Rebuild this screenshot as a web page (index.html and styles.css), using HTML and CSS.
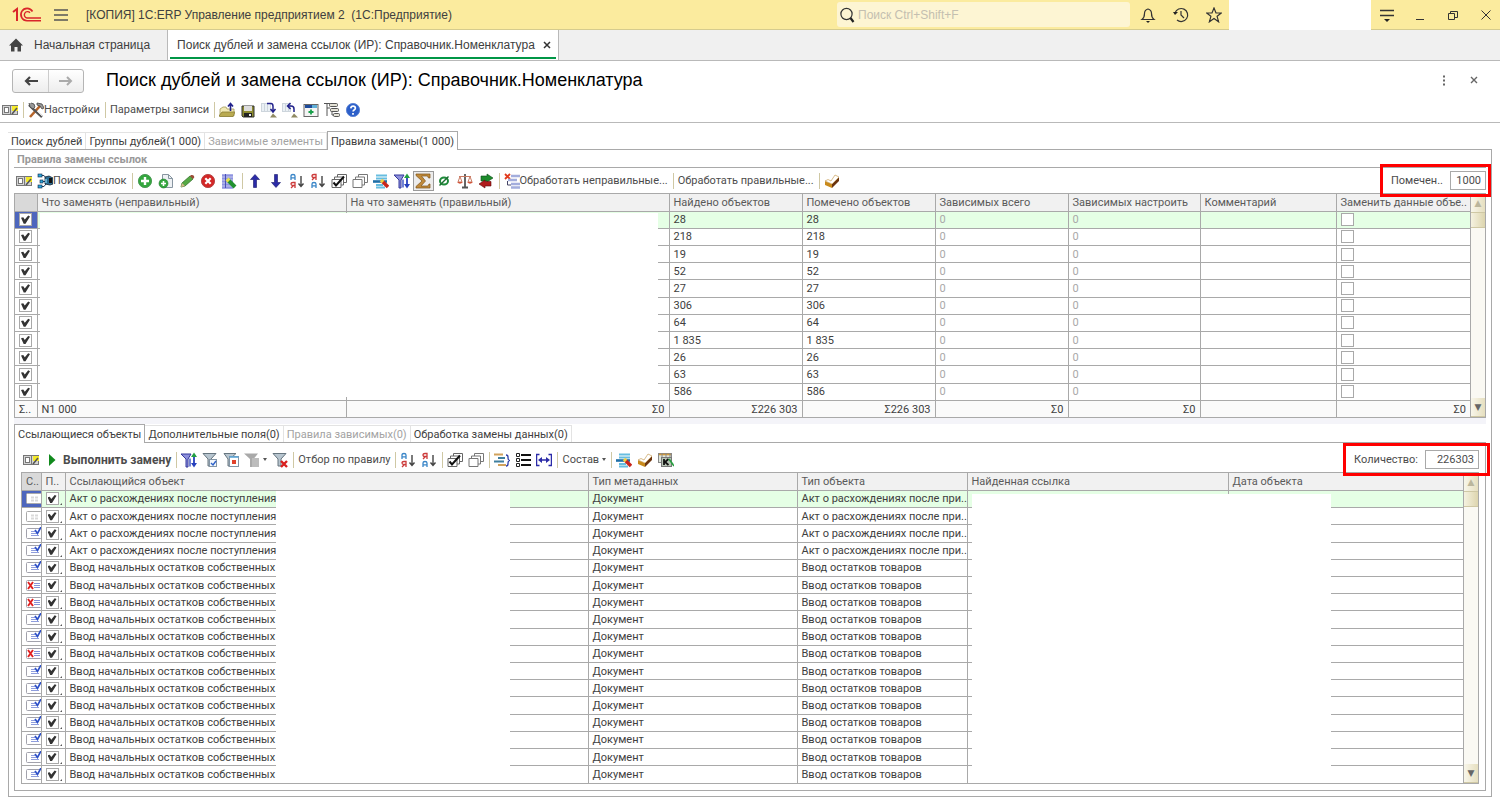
FILE: index.html
```html
<!DOCTYPE html>
<html lang="ru">

<head>
    <meta charset="UTF-8">
    <meta name="viewport" content="width=device-width, initial-scale=1.0">
    <title>Поиск дублей и замена ссылок</title>
    <link rel="stylesheet" href="styles.css">
</head>

<body>
    <!-- icon set -->
    <svg class="sprite" xmlns="http://www.w3.org/2000/svg">
        <symbol id="i-panel" viewBox="0 0 16 16">
            <rect x="0.5" y="3.5" width="15" height="9" fill="#d4d4d4" stroke="#777" />
            <rect x="2.5" y="5.5" width="4" height="5" fill="#fff" stroke="#777" />
            <rect x="10" y="4" width="6" height="5" fill="#f4e92a" />
            <path d="M10 12l5-6" stroke="#555" stroke-width="1.5" />
            <path d="M8.500 4v8" stroke="#777" />
        </symbol>
        <symbol id="i-tools" viewBox="0 0 16 16">
            <path d="M2 15L12 4" stroke="#b5652b" stroke-width="2.6" />
            <path d="M1 3l4 4 9 8" stroke="#555" stroke-width="2.4" fill="none" />
            <path d="M1 1l1 4 3 2 2-2-1-3-3-1M9 1l5 1 2 4-2 1-2-3-3-1z" fill="#999" stroke="#444" stroke-width=".8" />
            <path d="M9 9l5 5" stroke="#ddd" />
        </symbol>
        <symbol id="i-open" viewBox="0 0 16 16">
            <path d="M1 14V7l3-2h3l1 2h7v7z" fill="#f0e9b4" stroke="#a39a58" stroke-width=".8" />
            <path d="M0 14l3-4h13l-2 4.500H1z" fill="#b9aa50" stroke="#8a7d35" stroke-width=".8" />
            <path d="M11.500 9V2M9 4.500l2.500-3 2.500 3" stroke="#22228c" stroke-width="1.6" fill="none" />
        </symbol>
        <symbol id="i-save" viewBox="0 0 16 16">
            <path d="M2 4h12v11H3l-1-1z" fill="#8c8a2f" stroke="#333" />
            <rect x="4" y="4" width="8" height="5" fill="#ddd" />
            <rect x="4" y="11" width="8" height="4" fill="#222" />
            <rect x="9" y="12" width="2" height="2" fill="#eee" />
        </symbol>
        <symbol id="i-load" viewBox="0 0 16 16">
            <rect x="0.500" y="1.500" width="9" height="8" fill="#eaf0f5" stroke="#cdd5dc" />
            <path d="M3.500 2v7M6.500 2v7" stroke="#cdd5dc" />
            <path d="M6 1.500h4q2 0 2 3v5M9.500 7l2.500 3 2.500-3" stroke="#22228c" stroke-width="1.5" fill="none" />
            <path d="M9 15.500l3-4 4 4z" fill="#8f8a62" />
        </symbol>
        <symbol id="i-unload" viewBox="0 0 16 16">
            <rect x="0.500" y="1.500" width="8" height="8" fill="#eaf0f5" stroke="#cdd5dc" />
            <path d="M3.500 2v7M6.500 2v7" stroke="#cdd5dc" />
            <path d="M12 10V7q0-3-3-3H6M8.500 1L5.500 4l3 3" stroke="#22228c" stroke-width="1.5" fill="none" />
            <path d="M9 15.500l3-4 4 4z" fill="#8f8a62" />
        </symbol>
        <symbol id="i-window" viewBox="0 0 16 16">
            <rect x="1" y="2.500" width="14" height="12" fill="#f4f4f4" stroke="#666" />
            <rect x="2" y="3" width="12" height="3" fill="#1d4b9b" />
            <rect x="9" y="3" width="5" height="3" fill="#5fb0d8" />
            <path d="M8 7.500v5M5.500 10h5" stroke="#19a04b" stroke-width="1.8" />
        </symbol>
        <symbol id="i-tree" viewBox="0 0 16 16">
            <path d="M0 1.500h7M3 2v12M3 6h3M8 8v5h2" stroke="#555" fill="none" />
            <rect x="5.500" y="1.500" width="8" height="3" rx="1" fill="#e4e2d6" stroke="#555" />
            <rect x="6.500" y="6.500" width="8" height="3" rx="1" fill="#e4e2d6" stroke="#555" />
            <rect x="9.500" y="11.500" width="6" height="3" rx="1" fill="#e4e2d6" stroke="#555" />
        </symbol>
        <symbol id="i-help" viewBox="0 0 16 16">
            <circle cx="8" cy="8" r="6.600" fill="#2c5fc9" stroke="#5f86d6" />
            <path d="M5.800 6.300q.2-2.200 2.300-2.200t2.300 2q0 1.200-1.300 1.900-1 .6-1 1.600M8 11v1.800" stroke="#fff" stroke-width="1.7" fill="none" />
        </symbol>
        <symbol id="i-links" viewBox="0 0 16 16">
            <path d="M5 2.500h2l3 4M5 8.500h5M5 13.500h2l3-4" stroke="#246" fill="none" />
            <rect x="1" y="1" width="4" height="3" fill="#2aa5d8" stroke="#124" stroke-width=".6" />
            <rect x="3" y="7" width="3" height="3" fill="#2aa5d8" stroke="#124" stroke-width=".6" />
            <rect x="1" y="12" width="4" height="3" fill="#2aa5d8" stroke="#124" stroke-width=".6" />
            <path d="M8 4l4-1 4 2v6l-3 1-5-1z" fill="#2b6d94" stroke="#123" stroke-width=".8" />
            <path d="M12 5h3v5h-3z" fill="#111" />
            <path d="M9 6v4" stroke="#7fd0f0" stroke-width="1.400" />
        </symbol>
        <symbol id="i-add" viewBox="0 0 16 16">
            <circle cx="8" cy="8" r="6.600" fill="#34a63e" stroke="#4f9c58" />
            <path d="M8 4v8M4 8h8" stroke="#fff" stroke-width="2.400" />
        </symbol>
        <symbol id="i-copy" viewBox="0 0 16 16">
            <path d="M4.500 1.500h6l4 4v9h-10z" fill="#eef1f4" stroke="#8795a0" />
            <path d="M10.500 1.500v4h4" fill="none" stroke="#8795a0" />
            <circle cx="5.500" cy="10.500" r="4.500" fill="#34a63e" stroke="#1f7d2b" stroke-width=".6" />
            <path d="M5.500 8v5M3 10.500h5" stroke="#fff" stroke-width="1.600" />
        </symbol>
        <symbol id="i-edit" viewBox="0 0 16 16">
            <path d="M2 14l1-4L11 3l3 3-8 7z" fill="#55a944" stroke="#35722c" stroke-width=".8" />
            <path d="M2 14l1-4 3 3z" fill="#d6b98a" />
            <path d="M11 3l1-1q2-.5 3 1t-1 3z" fill="#9c4e38" />
        </symbol>
        <symbol id="i-delete" viewBox="0 0 16 16">
            <circle cx="8" cy="8" r="6.600" fill="#d32626" stroke="#b84a4a" />
            <path d="M5.300 5.300l5.400 5.400M10.700 5.300l-5.400 5.400" stroke="#fff" stroke-width="2.200" />
        </symbol>
        <symbol id="i-listpen" viewBox="0 0 16 16">
            <path d="M1 2.500h11M1 5.500h11M1 8.500h11M1 11.500h11M1 14.500h11" stroke="#8e94e0" stroke-width="2.400" />
            <path d="M4.500 1v14" stroke="#4a50b8" />
            <path d="M7 7l7 7" stroke="#22902f" stroke-width="4" />
            <path d="M6 6l2 2" stroke="#e6e04b" stroke-width="4" />
        </symbol>
        <symbol id="i-up" viewBox="0 0 16 16">
            <path d="M8 1.500l4.500 5h-3v8h-3v-8h-3z" fill="#2b2ba8" stroke="#15156a" stroke-width=".6" />
        </symbol>
        <symbol id="i-down" viewBox="0 0 16 16">
            <path d="M8 14.500l4.500-5h-3v-8h-3v8h-3z" fill="#2b2ba8" stroke="#15156a" stroke-width=".6" />
        </symbol>
        <symbol id="i-az" viewBox="0 0 16 16">
            <path d="M2 7V3q0-1.500 2-1.500T6 3v4M2 4.800h4" stroke="#3a86c8" stroke-width="1.300" fill="none" />
            <path d="M6 15V9.500H4q-2 0-2 1.500t2 1.500h2M4.500 12.500L2 15" stroke="#cc3a3a" stroke-width="1.300" fill="none" />
            <path d="M12 3v10M9.500 10.500l2.500 3 2.500-3" stroke="#444" stroke-width="1.400" fill="none" />
        </symbol>
        <symbol id="i-za" viewBox="0 0 16 16">
            <path d="M6 7V1.500H4Q2 1.500 2 3t2 1.500h2M4.500 4.500L2 7" stroke="#cc3a3a" stroke-width="1.300" fill="none" />
            <path d="M2 15v-4q0-1.500 2-1.500t2 1.500v4M2 12.800h4" stroke="#3a86c8" stroke-width="1.300" fill="none" />
            <path d="M12 3v10M9.500 10.500l2.500 3 2.500-3" stroke="#444" stroke-width="1.400" fill="none" />
        </symbol>
        <symbol id="i-checkall" viewBox="0 0 16 16">
            <path d="M6.500 1.500h9v8h-9z" fill="#fff" stroke="#666" />
            <path d="M3.500 4h9v8h-9z" fill="#fff" stroke="#666" />
            <path d="M1 6.500h9v8H1z" fill="#fff" stroke="#666" />
            <path d="M2.500 9.500l2.500 3 8-9" stroke="#111" stroke-width="2" fill="none" />
        </symbol>
        <symbol id="i-uncheck" viewBox="0 0 16 16">
            <path d="M6.500 1.500h9v8h-9z" fill="#fff" stroke="#777" />
            <path d="M3.500 4h9v8h-9z" fill="#fff" stroke="#777" />
            <path d="M1 6.500h9v8H1z" fill="#fff" stroke="#777" />
        </symbol>
        <symbol id="i-rowpen" viewBox="0 0 16 16">
            <path d="M3 2.500h11M3 5.500h11M3 12h7M3 14.500h9" stroke="#67bde0" stroke-width="2" />
            <path d="M0 8.500h14" stroke="#1f6fa8" stroke-width="2.600" />
            <path d="M9 8l6 6" stroke="#c9261c" stroke-width="3.600" />
            <path d="M8 7l2 2" stroke="#f0cf43" stroke-width="3.600" />
        </symbol>
        <symbol id="i-filtersort" viewBox="0 0 16 16">
            <path d="M0 2h10L7 7v8H5V7z" fill="#8d90dc" stroke="#34389c" />
            <path d="M9 14.500v-8" stroke="#2640bd" stroke-width="1.300" />
            <path d="M13 3v10" stroke="#2640bd" stroke-width="1.800" />
            <path d="M10 5l3-4.500L16 5z" fill="#23a044" />
            <path d="M10 11l3 4.500L16 11z" fill="#2640bd" />
        </symbol>
        <symbol id="i-sum" viewBox="0 0 16 16">
            <path d="M1 1h14v4h-1.500L12.500 3H6.500l4 5-4.500 5h7l1-2H15v4H1v-1.500L7 8 1 2.500z" fill="#c08a3a" stroke="#80541a" stroke-width=".7" />
        </symbol>
        <symbol id="i-empty" viewBox="0 0 16 16">
            <ellipse cx="8" cy="8" rx="4" ry="3.500" fill="none" stroke="#1e8a3a" stroke-width="2" />
            <path d="M3.500 12.500l9-9" stroke="#1b6d30" stroke-width="1.400" />
        </symbol>
        <symbol id="i-scales" viewBox="0 0 16 16">
            <path d="M8 1v13M5 14.500h6" stroke="#555" stroke-width="1.800" />
            <path d="M2 3.500h12M3 3.500L1 9h4zM13 3.500L11 9h4z" stroke="#c97a62" fill="none" />
            <path d="M0 9h6q-3 3.500-6 0M10 9h6q-3 3.500-6 0" fill="#d0563c" />
        </symbol>
        <symbol id="i-swap" viewBox="0 0 16 16">
            <path d="M3 3h6V1l6 4-6 4V8H3z" fill="#1c8b2b" stroke="#0e4c17" stroke-width=".6" />
            <path d="M13 8.500H7V7l-6 4 6 4v-2h6z" fill="#b01c1c" stroke="#5e0c0c" stroke-width=".6" />
        </symbol>
        <symbol id="i-badrows" viewBox="0 0 16 16">
            <path d="M1 1l5 5M6 1L1 6" stroke="#e23a1c" stroke-width="1.800" />
            <path d="M7 3h9M4 7h9M7 11h9M7 14.500h9" stroke="#a3addc" stroke-width="2.600" />
            <path d="M3.500 8v4H7" stroke="#446" fill="none" />
        </symbol>
        <symbol id="i-brush" viewBox="0 0 16 16">
            <path d="M1 8l7 3v4l-7-3z" fill="#c98a1c" />
            <path d="M8 11l7-7v4l-7 7z" fill="#6b3410" />
            <path d="M1 8l3-1.500L7 8l4-6 4 2-7 7z" fill="#fff" stroke="#c9a05c" stroke-width=".7" />
        </symbol>
        <symbol id="i-play" viewBox="0 0 16 16">
            <path d="M5 2l6.500 6L5 14z" fill="#118a1d" />
        </symbol>
        <symbol id="i-filter" viewBox="0 0 16 16">
            <path d="M1 1.500h13L9 7v7H6V7z" fill="#b7c5cf" stroke="#66757f" />
            <rect x="7.500" y="7.500" width="7" height="7" fill="#f3f7fb" stroke="#8495a5" />
            <path d="M9 11l2 2 3-4" stroke="#2f62c9" stroke-width="1.400" fill="none" />
        </symbol>
        <symbol id="i-filterform" viewBox="0 0 16 16">
            <path d="M1 1.500h12L7 7v7H5V7z" fill="#b7c5cf" stroke="#66757f" />
            <rect x="6.500" y="4.500" width="9" height="10" fill="#fff" stroke="#8495a5" />
            <path d="M6.500 5h9" stroke="#5aa5d8" stroke-width="1.600" />
            <rect x="9" y="8" width="4" height="4" fill="#e2432c" />
        </symbol>
        <symbol id="i-filteroff" viewBox="0 0 16 16">
            <path d="M0 1.500h14L9.500 7v8H6V7z" fill="#a9a9a9" />
            <rect x="8" y="6" width="7" height="9" fill="#bcbcbc" />
        </symbol>
        <symbol id="i-filterclear" viewBox="0 0 16 16">
            <path d="M1 1.500h13L9 7v7H6V7z" fill="#b7c5cf" stroke="#66757f" />
            <path d="M9 9l6 6M15 9l-6 6" stroke="#d81f1f" stroke-width="2.400" />
        </symbol>
        <symbol id="i-group" viewBox="0 0 16 16">
            <path d="M0 2.500h9M4 13h8" stroke="#d1a25c" stroke-width="2" />
            <path d="M4 6h7M0 9.500h10" stroke="#3f7f9f" stroke-width="2" />
            <path d="M12 3q2 0 2 2v1q0 2 1.500 2.500Q14 9 14 11v1q0 2-2 2" stroke="#2b3ba8" stroke-width="1.300" fill="none" />
        </symbol>
        <symbol id="i-list" viewBox="0 0 16 16">
            <path d="M6 3h10M6 8h10M6 13h10" stroke="#111" stroke-width="2" />
            <path d="M1.500 1.500h3v3h-3zM1.500 6.500h3v3h-3zM1.500 11.500h3v3h-3z" fill="none" stroke="#222" />
        </symbol>
        <symbol id="i-width" viewBox="0 0 16 16">
            <path d="M3.500 2.500h-3v11h3M12.500 2.500h3v11h-3M4 8h8" stroke="#2b2ba8" stroke-width="1.500" fill="none" />
            <path d="M2 8l4-3v6zM14 8l-4-3v6z" fill="#2b2ba8" />
        </symbol>
        <symbol id="i-console" viewBox="0 0 16 16">
            <rect x="0.500" y="1.500" width="13" height="9" fill="#dfe6dc" stroke="#888" />
            <path d="M1 2.500h12" stroke="#d39a3a" stroke-width="1.600" />
            <path d="M4 1v9M8 1v5M12 1v5" stroke="#888" />
            <rect x="3.500" y="5.500" width="10" height="9" fill="#b7c4b4" stroke="#777" />
            <path d="M6 7v6M10.500 7L7 10l3.500 3" stroke="#111" stroke-width="1.800" fill="none" />
            <path d="M11 7l5 7" stroke="#27a040" stroke-width="1.600" />
        </symbol>
        <symbol id="i-doc" viewBox="0 0 16 13">
            <rect x="0.500" y="1.500" width="15" height="10" rx="1" fill="#fff" stroke="#aaa" />
            <path d="M5 5.500h3M9 5.500h3M5 8.500h3M9 8.500h3" stroke="#d9d9d9" stroke-width="2" />
        </symbol>
        <symbol id="i-posted" viewBox="0 0 16 13">
            <rect x="0.500" y="1.500" width="15" height="10" rx="1" fill="#fff" stroke="#a2a2ac" />
            <path d="M5 4.500h4M5 6.500h7M5 8.500h8" stroke="#8f9ddd" />
            <path d="M9 3l2.500 3.500L15 0" stroke="#2d50c8" stroke-width="1.700" fill="none" />
        </symbol>
        <symbol id="i-deleted" viewBox="0 0 16 13">
            <rect x="0.500" y="1.500" width="15" height="10" rx="1" fill="#fff" stroke="#a2a2ac" />
            <path d="M8 4.500h6M8 6.500h6M8 8.500h6" stroke="#8593d8" />
            <path d="M2 3l5 7M7 3l-5 7" stroke="#e02121" stroke-width="1.900" />
        </symbol>
    </svg>

    <header class="titlebar">
        <svg class="logo" viewBox="0 0 30 16">
            <path d="M1 5l4-3v12" stroke="#d9252a" stroke-width="2" fill="none" />
            <path d="M20.500 4.500A6.200 6.200 0 1 0 15 13.800H29" stroke="#d9252a" stroke-width="1.600" fill="none" />
            <path d="M18 5.800A3.200 3.200 0 1 0 15 11H29" stroke="#d9252a" stroke-width="1.400" fill="none" />
        </svg>
        <button class="flat" aria-label="Меню">
            <svg class="icon" viewBox="0 0 16 16"><path d="M1 3h14M1 8h14M1 13h14" stroke="#555" stroke-width="1.400" /></svg>
        </button>
        <div class="app-name">[КОПИЯ] 1С:ERP Управление предприятием 2&nbsp; (1С:Предприятие)</div>
        <label class="search">
            <svg class="icon" viewBox="0 0 16 16"><circle cx="7.500" cy="7" r="5.600" fill="none" stroke="#333" stroke-width="1.200" /><path d="M11.500 11l3 4" stroke="#222" stroke-width="2.200" /></svg>
            <input type="text" placeholder="Поиск Ctrl+Shift+F" aria-label="Поиск">
        </label>
        <div class="title-tools">
            <button class="flat" aria-label="Уведомления">
                <svg class="icon" viewBox="0 0 16 16"><path d="M2 12.500q2.500-2 2.500-6Q4.500 3 8 2q3.500 1 3.500 4.500 0 4 2.500 6z" fill="none" stroke="#333" stroke-width="1.200" /><path d="M6 14h4l-2 2z" fill="#222" /></svg>
            </button>
            <button class="flat" aria-label="История">
                <svg class="icon" viewBox="0 0 16 16"><path d="M2 6a6.500 6.500 0 1 1 2 7" fill="none" stroke="#333" stroke-width="1.200" /><path d="M8 4v4l3 3" fill="none" stroke="#333" stroke-width="1.200" /><path d="M0 5h5l-3 3z" fill="#222" /></svg>
            </button>
            <button class="flat" aria-label="Избранное">
                <svg class="icon" viewBox="0 0 16 16"><path d="M8 1l2 5h5.300l-4.200 3.300 1.500 5.500L8 11.500l-4.600 3.300 1.500-5.500L.7 6H6z" fill="none" stroke="#333" stroke-width="1.200" /></svg>
            </button>
        </div>
        <div class="user-name"></div>
        <div class="window-tools">
            <button class="flat" aria-label="Сервис">
                <svg class="icon" viewBox="0 0 16 16"><path d="M1 3.500h14M1 8.500h14" stroke="#333" stroke-width="1.400" /><path d="M5 12h6l-3 3z" fill="#222" /></svg>
            </button>
            <button class="flat" aria-label="Свернуть">
                <svg class="icon" viewBox="0 0 16 16"><path d="M4 12.500h8" stroke="#333" /></svg>
            </button>
            <button class="flat" aria-label="Развернуть">
                <svg class="icon" viewBox="0 0 16 16"><path d="M3.500 6.500h6v6h-6zM5.500 6.500v-2h7v6h-3" fill="none" stroke="#333" /></svg>
            </button>
            <button class="flat" aria-label="Закрыть">
                <svg class="icon" viewBox="0 0 16 16"><path d="M3.500 3.500l9 9M12.500 3.500l-9 9" stroke="#333" /></svg>
            </button>
        </div>
    </header>

    <nav class="page-tabs">
        <a class="page-tab" href="#">
            <svg class="icon" viewBox="0 0 16 16"><path d="M8 1.500l7 7h-2v6H9.500V10h-3v4.500H3v-6H1z" fill="#444" /></svg>
            Начальная страница
        </a>
        <a class="page-tab active" href="#">
            <span>Поиск дублей и замена ссылок (ИР): Справочник.Номенклатура</span>
            <svg class="tab-close" viewBox="0 0 8 8"><path d="M1 1l6 6M7 1L1 7" stroke="#333" stroke-width="1.500" /></svg>
        </a>
    </nav>

    <div class="form-head">
        <div class="history">
            <button aria-label="Назад"><svg class="icon" viewBox="0 0 16 16"><path d="M15 8H3M7 4L3 8l4 4" stroke="#444" stroke-width="2.200" fill="none" /></svg></button>
            <button aria-label="Вперед"><svg class="icon" viewBox="0 0 16 16"><path d="M1 8h12M9 4l4 4-4 4" stroke="#aaa" stroke-width="2" fill="none" /></svg></button>
        </div>
        <h1>Поиск дублей и замена ссылок (ИР): Справочник.Номенклатура</h1>
        <button class="flat" aria-label="Еще"><svg class="icon" viewBox="0 0 16 16"><path d="M7 2.500h2v2H7zM7 6.500h2v2H7zM7 10.500h2v2H7z" fill="#666" /></svg></button>
        <button class="flat" aria-label="Закрыть форму"><svg class="icon" viewBox="0 0 16 16"><path d="M5 4l6 6M11 4l-6 6" stroke="#666" stroke-width="1.400" /></svg></button>
    </div>

    <div class="toolbar main-toolbar">
        <button aria-label="Панель"><svg class="icon"><use href="#i-panel" /></svg></button>
        <i class="sep"></i>
        <button><svg class="icon"><use href="#i-tools" /></svg>Настройки</button>
        <i class="sep"></i>
        <button>Параметры записи</button>
        <i class="sep"></i>
        <button aria-label="Открыть"><svg class="icon"><use href="#i-open" /></svg></button>
        <button aria-label="Сохранить"><svg class="icon"><use href="#i-save" /></svg></button>
        <button aria-label="Загрузить"><svg class="icon"><use href="#i-load" /></svg></button>
        <button aria-label="Выгрузить"><svg class="icon"><use href="#i-unload" /></svg></button>
        <button aria-label="Новое окно"><svg class="icon"><use href="#i-window" /></svg></button>
        <button aria-label="Структура"><svg class="icon"><use href="#i-tree" /></svg></button>
        <button aria-label="Справка"><svg class="icon"><use href="#i-help" /></svg></button>
    </div>

    <main class="form">
        <div class="tabs">
            <button>Поиск дублей</button>
            <button>Группы дублей(1 000)</button>
            <button class="muted">Зависимые элементы</button>
            <button class="active">Правила замены(1 000)</button>
        </div>
        <section class="panel">
            <h2>Правила замены ссылок</h2>
            <div class="toolbar">
                <button aria-label="Панель"><svg class="icon"><use href="#i-panel" /></svg></button>
                <button><svg class="icon"><use href="#i-links" /></svg>Поиск ссылок</button>
                <i class="sep"></i>
                <button aria-label="Добавить"><svg class="icon"><use href="#i-add" /></svg></button>
                <button aria-label="Скопировать"><svg class="icon"><use href="#i-copy" /></svg></button>
                <button aria-label="Изменить"><svg class="icon"><use href="#i-edit" /></svg></button>
                <button aria-label="Удалить"><svg class="icon"><use href="#i-delete" /></svg></button>
                <button aria-label="Редактировать список"><svg class="icon"><use href="#i-listpen" /></svg></button>
                <i class="sep"></i>
                <button aria-label="Вверх"><svg class="icon"><use href="#i-up" /></svg></button>
                <button aria-label="Вниз"><svg class="icon"><use href="#i-down" /></svg></button>
                <button aria-label="По возрастанию"><svg class="icon"><use href="#i-az" /></svg></button>
                <button aria-label="По убыванию"><svg class="icon"><use href="#i-za" /></svg></button>
                <button aria-label="Отметить все"><svg class="icon"><use href="#i-checkall" /></svg></button>
                <button aria-label="Снять отметки"><svg class="icon"><use href="#i-uncheck" /></svg></button>
                <button aria-label="Обработать строки"><svg class="icon"><use href="#i-rowpen" /></svg></button>
                <button aria-label="Отбор и порядок"><svg class="icon"><use href="#i-filtersort" /></svg></button>
                <button class="pressed" aria-label="Итоги"><svg class="icon"><use href="#i-sum" /></svg></button>
                <button aria-label="Пустые"><svg class="icon"><use href="#i-empty" /></svg></button>
                <button aria-label="Сравнить"><svg class="icon"><use href="#i-scales" /></svg></button>
                <button aria-label="Поменять местами"><svg class="icon"><use href="#i-swap" /></svg></button>
                <i class="sep"></i>
                <button><svg class="icon"><use href="#i-badrows" /></svg>Обработать неправильные...</button>
                <i class="sep"></i>
                <button>Обработать правильные...</button>
                <i class="sep"></i>
                <button aria-label="Очистить"><svg class="icon"><use href="#i-brush" /></svg></button>
                <div class="counter">
                    <label for="marked">Помечен..</label>
                    <input id="marked" class="short" type="text" value="1000">
                </div>
            </div>

            <div class="grid rules">
                <table>
                    <colgroup>
                        <col class="w22"><col class="w309"><col class="w323"><col class="w133"><col class="w133"><col class="w133"><col class="w132"><col class="w136"><col>
                    </colgroup>
                    <thead>
                        <tr>
                            <th class="current"></th>
                            <th>Что заменять (неправильный)</th>
                            <th>На что заменять (правильный)</th>
                            <th>Найдено объектов</th>
                            <th>Помечено объектов</th>
                            <th>Зависимых всего</th>
                            <th>Зависимых настроить</th>
                            <th>Комментарий</th>
                            <th>Заменить данные объе..</th>
                        </tr>
                    </thead>
                    <tbody id="rules-body"></tbody>
                    <tfoot>
                        <tr>
                            <td class="mark">Σ..</td>
                            <td>N1 000</td>
                            <td class="num">Σ0</td>
                            <td class="num">Σ226 303</td>
                            <td class="num">Σ226 303</td>
                            <td class="num">Σ0</td>
                            <td class="num">Σ0</td>
                            <td></td>
                            <td class="num">Σ0</td>
                        </tr>
                    </tfoot>
                </table>
                <div class="scroll">
                    <span class="arrow off">▲</span><span class="thumb"></span><span class="track"></span><span class="arrow">▼</span>
                </div>
                <div class="blank blank-rules"></div>
            </div>

            <div class="splitter"></div>

            <div class="tabs">
                <button class="active">Ссылающиеся объекты</button>
                <button>Дополнительные поля(0)</button>
                <button class="muted">Правила зависимых(0)</button>
                <button>Обработка замены данных(0)</button>
            </div>
            <section class="panel inner">
                <div class="toolbar">
                    <button aria-label="Панель"><svg class="icon"><use href="#i-panel" /></svg></button>
                    <button class="strong"><svg class="icon"><use href="#i-play" /></svg>Выполнить замену</button>
                    <i class="sep"></i>
                    <button aria-label="Отбор и порядок"><svg class="icon"><use href="#i-filtersort" /></svg></button>
                    <button aria-label="Отбор"><svg class="icon"><use href="#i-filter" /></svg></button>
                    <button aria-label="Отбор по значению"><svg class="icon"><use href="#i-filterform" /></svg></button>
                    <button class="drop" aria-label="История отборов"><svg class="icon"><use href="#i-filteroff" /></svg></button>
                    <button aria-label="Отключить отбор"><svg class="icon"><use href="#i-filterclear" /></svg></button>
                    <i class="sep"></i>
                    <button>Отбор по правилу</button>
                    <i class="sep"></i>
                    <button aria-label="По возрастанию"><svg class="icon"><use href="#i-az" /></svg></button>
                    <button aria-label="По убыванию"><svg class="icon"><use href="#i-za" /></svg></button>
                    <i class="sep"></i>
                    <button aria-label="Отметить все"><svg class="icon"><use href="#i-checkall" /></svg></button>
                    <button aria-label="Снять отметки"><svg class="icon"><use href="#i-uncheck" /></svg></button>
                    <i class="sep"></i>
                    <button aria-label="Группировка"><svg class="icon"><use href="#i-group" /></svg></button>
                    <button aria-label="Список"><svg class="icon"><use href="#i-list" /></svg></button>
                    <button aria-label="Ширина колонок"><svg class="icon"><use href="#i-width" /></svg></button>
                    <i class="sep"></i>
                    <button class="drop">Состав</button>
                    <i class="sep"></i>
                    <button aria-label="Обработать строки"><svg class="icon"><use href="#i-rowpen" /></svg></button>
                    <button aria-label="Очистить"><svg class="icon"><use href="#i-brush" /></svg></button>
                    <button aria-label="Консоль"><svg class="icon"><use href="#i-console" /></svg></button>
                    <div class="counter">
                        <label for="total">Количество:</label>
                        <input id="total" type="text" value="226303">
                    </div>
                </div>

                <div class="grid refs">
                    <table>
                        <colgroup>
                            <col class="w19"><col class="w24"><col class="w523"><col class="w209"><col class="w170"><col class="w261"><col>
                        </colgroup>
                        <thead>
                            <tr>
                                <th class="current">С..</th>
                                <th>П..</th>
                                <th>Ссылающийся объект</th>
                                <th>Тип метаданных</th>
                                <th>Тип объекта</th>
                                <th>Найденная ссылка</th>
                                <th>Дата объекта</th>
                            </tr>
                        </thead>
                        <tbody id="refs-body"></tbody>
                    </table>
                    <div class="scroll">
                        <span class="arrow off">▲</span><span class="thumb"></span><span class="track"></span><span class="arrow">▼</span>
                    </div>
                    <div class="blank blank-object"></div>
                    <div class="blank blank-link"></div>
                </div>
            </section>
        </section>
    </main>
    <script src="script.js"></script>
</body>

</html>
```
FILE: styles.css
```css
* {
    box-sizing: border-box;
}

body {
    margin: 0;
    min-height: 100vh;
    display: flex;
    flex-direction: column;
    background: #fff;
    color: #404040;
    font-family: Roboto, "Liberation Sans", sans-serif;
    font-size: 11px;
}

button,
input {
    font: inherit;
    color: inherit;
}

button {
    border: none;
    background: none;
    padding: 0;
    white-space: nowrap;
}

.sprite {
    display: none;
}

.icon {
    width: 16px;
    height: 16px;
    flex: none;
    display: block;
}

/* window title */
.titlebar {
    display: flex;
    align-items: center;
    height: 30px;
    padding: 0 6px 0 12px;
    background: #fbeb9e;
    border-bottom: 1px solid #d5cb8e;
    font-family: "Liberation Sans", Arial, sans-serif;
    font-size: 12px;
}

.logo {
    width: 30px;
    height: 16px;
    margin-right: 11px;
}

.app-name {
    flex: 1;
    margin-left: 17px;
}

.search {
    display: flex;
    align-items: center;
    width: 293px;
    height: 25px;
    padding-left: 2px;
    border-radius: 3px;
    background: #fdf5d3;
}

.search input {
    flex: 1;
    border: none;
    background: none;
    padding: 0 3px;
}

.search input::placeholder {
    color: #c4bfb0;
}

.title-tools {
    display: flex;
    gap: 17px;
    padding: 0 7px 0 10px;
}

.user-name {
    width: 142px;
    height: 30px;
    background: #fff;
}

.window-tools {
    display: flex;
    gap: 17px;
    padding-left: 8px;
}

/* open pages */
.page-tabs {
    display: flex;
    height: 31px;
    background: #f0f0f0;
    border-bottom: 1px solid #b9b9b9;
    font-family: "Liberation Sans", Arial, sans-serif;
    font-size: 12px;
}

.page-tab {
    display: flex;
    align-items: center;
    gap: 10px;
    padding: 0 17px 0 8px;
    color: #404040;
    text-decoration: none;
}

.page-tab.active {
    gap: 8px;
    padding: 0 7px 0 9px;
    background: linear-gradient(#009646, #009646) 2px 27px / calc(100% - 4px) 2px no-repeat #fff;
    border-left: 1px solid #b9b9b9;
    border-right: 1px solid #b9b9b9;
}

.tab-close {
    width: 8px;
    height: 8px;
}

/* form caption */
.form-head {
    display: flex;
    align-items: center;
    gap: 14px;
    height: 36px;
    padding: 3px 18px 0 12px;
}

.form-head h1 {
    flex: 1;
    margin: 0 0 0 8px;
    color: #000;
    font: 18px "Liberation Sans", Arial, sans-serif;
}

.history {
    display: flex;
    border: 1px solid #b5b5b5;
    border-radius: 3px;
    background: linear-gradient(#fff, #ededed);
}

.history button {
    display: flex;
    align-items: center;
    justify-content: center;
    width: 35px;
    height: 22px;
}

.history button + button {
    border-left: 1px solid #ccc;
}

/* command bars */
.toolbar {
    display: flex;
    align-items: center;
    height: 26px;
    color: #4c4c4c;
}

.main-toolbar {
    border-bottom: 1px solid #b9b9b9;
}

.panel .toolbar {
    height: 25px;
}

.toolbar button {
    display: flex;
    align-items: center;
    height: 20px;
    padding: 0 3px 0 2px;
}

.toolbar .strong {
    gap: 3px;
    font-size: 12px;
    font-weight: bold;
}

.toolbar .pressed {
    border: 1px solid #9a9a9a;
    background: #ececec;
    padding: 0 2px 0 1px;
}

.toolbar .drop::after {
    content: "";
    margin-left: 3px;
    border: 2px solid transparent;
    border-top: 3px solid #555;
    border-bottom: none;
}

.sep {
    width: 1px;
    height: 16px;
    margin: 0 2px;
    background: #cfc8a4;
}

.counter {
    position: relative;
    z-index: 1;
    display: flex;
    align-items: center;
    gap: 7px;
    margin-left: auto;
}

.counter input {
    width: 54px;
    height: 19px;
    padding: 0 4px;
    border: 1px solid #a9a9a9;
    background: #fff;
    text-align: right;
}

.counter .short {
    width: 36px;
}

/* red frame around the counters */
.counter::after {
    content: "";
    position: absolute;
    inset: -7px -5px -7px -11px;
    border: 3px solid #f00;
    pointer-events: none;
}

.inner .counter::after {
    right: -11px;
}

/* tabs and panels */
.form {
    flex: 1;
    display: flex;
    flex-direction: column;
    padding: 8px;
}

.tabs {
    display: flex;
    align-items: flex-end;
    height: 18px;
}

.tabs button {
    height: 17px;
    padding: 0 3px;
    border: 1px solid #e3e3e3;
    border-left: none;
    border-bottom: none;
}

.tabs .muted {
    color: #a3a3a3;
}

.tabs .active {
    position: relative;
    height: 19px;
    margin-bottom: -1px;
    background: #fff;
    border: 1px solid #a9a9a9;
    border-bottom: none;
}

.panel {
    flex: 1;
    display: flex;
    flex-direction: column;
    padding: 3px 5px 5px;
    border: 1px solid #a9a9a9;
}

.panel h2 {
    margin: 0;
    padding: 0 3px;
    border-bottom: 1px solid #a9a9a9;
    color: #999;
    font-size: 11px;
    line-height: 14px;
}

.panel.inner {
    padding: 4px 6px 6px;
}

.splitter {
    height: 6px;
    background: #f4f4f9;
}

/* data grids */
.grid {
    position: relative;
    display: flex;
    border: 1px solid #a9a9a9;
}

.rules {
    height: 28vh;
}

.refs {
    flex: 1;
}

.grid table {
    flex: 1;
    width: 100%;
    table-layout: fixed;
    border-collapse: collapse;
}

.grid th,
.grid td {
    height: 17px;
    padding: 0 0 0 4px;
    border-right: 1px solid #a9a9a9;
    border-bottom: 1px solid #a9a9a9;
    line-height: 13px;
    text-align: left;
    font-weight: normal;
    white-space: nowrap;
    overflow: hidden;
}

.rules tfoot td,
.refs tbody tr:last-child td {
    border-bottom: none;
}

.grid th {
    background: #f1f1f1;
    color: #5a5a5a;
}

.grid th.current {
    background: #d9d9d9;
}

.grid td.num {
    padding-right: 4px;
    text-align: right;
}

.grid td.zero {
    color: #a9a9a9;
}

.grid tfoot td {
    background: #fafafa;
}

.selected td {
    background: #e5ffe5;
}

.selected td:first-child {
    background: #4d66bd;
}

.w19 { width: 19px; }
.w22 { width: 22px; }
.w24 { width: 24px; }
.w132 { width: 132px; }
.w133 { width: 133px; }
.w136 { width: 136px; }
.w170 { width: 170px; }
.w209 { width: 209px; }
.w261 { width: 261px; }
.w309 { width: 309px; }
.w323 { width: 323px; }
.w523 { width: 523px; }

.grid input {
    appearance: none;
    display: block;
    width: 13px;
    height: 13px;
    margin: 0;
    border: 1px solid #a9a9a9;
    background: #fff;
}

.grid input:checked::before {
    content: "";
    display: block;
    width: 9px;
    height: 9px;
    margin: 1px;
    background: #333;
    clip-path: polygon(0 30%, 25% 25%, 42% 50%, 80% 5%, 100% 15%, 50% 95%, 30% 95%);
}

.state svg {
    display: block;
    width: 16px;
    height: 13px;
}

.check {
    display: flex;
    align-items: flex-end;
    gap: 1px;
}

.check::after {
    content: "";
    border: 1px solid #555;
    border-top-color: transparent;
    border-left-color: transparent;
}

.scroll {
    display: flex;
    flex-direction: column;
    flex: none;
    width: 14px;
    background: #faf9f3;
}

.scroll .arrow {
    height: 19px;
    background: linear-gradient(90deg, #f8f6ea, #e6dfbf);
    border-bottom: 1px solid #cfc8a4;
    color: #666;
    font: 9px "DejaVu Sans", sans-serif;
    line-height: 18px;
    text-align: center;
}

.scroll .off {
    color: #bbb69c;
}

.scroll .thumb {
    height: 15px;
    background: linear-gradient(90deg, #f5f2e0, #ddd5ae);
    border-bottom: 1px solid #cfc8a4;
}

.scroll .track {
    flex: 1;
}

/* hidden data */
.blank {
    position: absolute;
    background: #fff;
}

.blank-rules {
    top: 19px;
    bottom: 20px;
    left: 25px;
    width: 618px;
}

.blank-object {
    top: 18px;
    bottom: 0;
    left: 254px;
    width: 234px;
}

.blank-link {
    top: 21px;
    bottom: 0;
    left: 950px;
    width: 359px;
}
```
FILE: script.js
```js
const found = ['28', '218', '19', '52', '27', '306', '64', '1 835', '26', '63', '586'];

document.getElementById('rules-body').innerHTML = found.map((count, i) => `
    <tr class="${i == 0 ? 'selected' : ''}">
        <td><input type="checkbox" aria-label="Пометка" checked></td>
        <td></td>
        <td></td>
        <td>${count}</td>
        <td>${count}</td>
        <td class="zero">0</td>
        <td class="zero">0</td>
        <td></td>
        <td><input type="checkbox" aria-label="Заменить данные объекта"></td>
    </tr>`).join('');

// d - draft, p - posted, x - marked for deletion
const icons = { d: 'i-doc', p: 'i-posted', x: 'i-deleted' };
const states = 'ddpppxxppxppppppp';

document.getElementById('refs-body').innerHTML = [...states].map((state, i) => `
    <tr class="${i == 0 ? 'selected' : ''}">
        <td class="state"><svg><use href="#${icons[state]}" /></svg></td>
        <td><div class="check"><input type="checkbox" aria-label="Пометка" checked></div></td>
        <td>${i < 4 ? 'Акт о расхождениях после поступления' : 'Ввод начальных остатков собственных товаров'}</td>
        <td>Документ</td>
        <td>${i < 4 ? 'Акт о расхождениях после при..' : 'Ввод остатков товаров'}</td>
        <td></td>
        <td></td>
    </tr>`).join('');
```
